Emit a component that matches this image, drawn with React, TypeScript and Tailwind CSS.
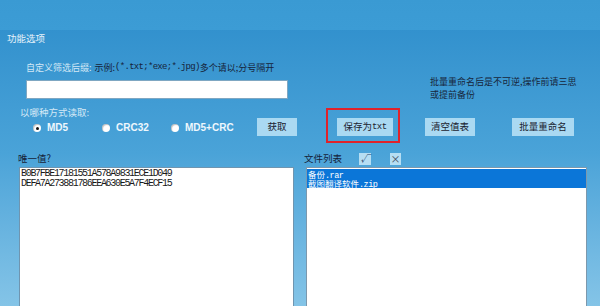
import React from "react";

const cjk = "font-['Noto_Sans_CJK_SC','Noto_Sans',sans-serif]";
const mono = "font-['Liberation_Mono','Noto_Sans_CJK_SC',monospace]";

function Radio({ label, checked, width }: { label: string; checked?: boolean; width: string }) {
    return (
        <div className={`flex items-center gap-[6px] pt-[2px] ${width}`}>
            <span className="flex h-[8px] w-[8px] items-center justify-center rounded-full bg-white shadow-[inset_1px_1px_1px_rgba(0,0,0,0.25)]">
                {checked && <span className="h-[3px] w-[3px] rounded-full bg-[#111]" />}
            </span>
            <span className="font-['Liberation_Sans',sans-serif] text-[10px] font-bold leading-none text-[#eef7fd]">{label}</span>
        </div>
    );
}

function Btn({ children, className = "" }: { children: React.ReactNode; className?: string }) {
    return (
        <div className={`flex h-[18px] items-center justify-center bg-[#aad9f2] text-[9.5px] leading-none text-[#1b2330] ${className}`}>
            {children}
        </div>
    );
}

export default function App() {
    return (
        <div className={`h-[306px] w-[600px] overflow-hidden bg-gradient-to-b from-[#2c8dcb] via-[#4aa3d8] to-[#84c4e7] ${cjk}`}>
            <div className="h-[30px] bg-gradient-to-b from-[#3a9ad3] to-[#3c9cd5]" />

            {/* 功能选项 */}
            <div className="h-[16px] pl-[7px] text-[9.5px] leading-[16px] text-[#e8f3fb]">功能选项</div>

            <div className="mt-[15px] flex h-[12px] items-center pl-[26px] text-[9px] leading-none">
                <span className="text-[#d3e8f6]">自定义筛选后缀:</span>
                <span className="ml-[3px] text-[#16243a]">示例:</span>
                <span className={`${mono} text-[9px] tracking-[-0.7px] text-[#16243a]`}>(*.txt;*exe;*.jpg)</span>
                <span className="text-[#16243a]">多个请以;分号隔开</span>
            </div>

            <div className="mt-[2px] flex">
                <div className="pl-[26px] pt-[5px]">
                    <div className="h-[19px] w-[262px] border border-[#7fa7c2] bg-white" />
                </div>
                <div className="ml-[142px] w-[160px] text-[9px] leading-[13px] text-[#17263b]">
                    <div>批量重命名后是不可逆,操作前请三思</div>
                    <div>或提前备份</div>
                </div>
            </div>

            <div className="mt-[6px] h-[11px] pl-[20px] text-[9.5px] leading-[11px] text-[#d3e8f6]">以哪种方式读取:</div>

            <div className="flex h-[18px] items-center pl-[33px]">
                <Radio label="MD5" checked width="w-[69px]" />
                <Radio label="CRC32" width="w-[69px]" />
                <Radio label="MD5+CRC" width="w-[86px]" />
                <Btn className="w-[40px]">获取</Btn>
                <div className="relative ml-[40px]">
                    <Btn className="w-[56px]">
                        保存为<span className={`${mono} text-[9px] tracking-[-0.5px]`}>txt</span>
                    </Btn>
                    <div className="absolute -left-[11px] -top-[10px] h-[35px] w-[74px] border-2 border-[#e0222b]" />
                </div>
                <Btn className="ml-[32px] w-[50px]">清空值表</Btn>
                <Btn className="ml-[37px] w-[62px]">批量重命名</Btn>
            </div>

            <div className="mt-[16px] flex h-[13px] items-center pl-[18px] text-[9.5px] leading-none text-[#15233a]">
                <span className="w-[286px]">唯一值?</span>
                <span>文件列表</span>
                <span className="ml-[17px] flex h-[12px] w-[12px] items-center justify-center bg-[#b6def3] text-[9px] italic text-[#1c3f66]">√</span>
                <span className="ml-[19px] flex h-[12px] w-[11px] items-center justify-center bg-[#b6def3] text-[10px] text-[#3b4a5a]">×</span>
            </div>

            <div className="mt-[2px] flex pl-[19px]">
                <div className={`h-[150px] w-[275px] border border-[#6f95b0] bg-white pl-[1px] pt-[1px] ${mono} text-[10px] leading-[10px] tracking-[-1.3px] text-[#1a1a1a]`}>
                    <div>B0B7FBE17181551A578A9831ECE1D049</div>
                    <div>DEFA7A273881786EEA630E5A7F4ECF15</div>
                </div>
                <div className="ml-[12px] h-[150px] w-[281px] border border-[#7c98ad] bg-white pt-[1px] text-[8.5px] text-white">
                    <div className="bg-[#0b76d8] py-[1px]">
                        <div className="h-[8px] overflow-visible pl-[1px] leading-[8px]">
                            备份<span className={`${mono} tracking-[-0.5px]`}>.rar</span>
                        </div>
                        <div className="mt-[1px] h-[8px] overflow-visible pl-[1px] leading-[8px]">
                            截图翻译软件<span className={`${mono} tracking-[-0.5px]`}>.zip</span>
                        </div>
                    </div>
                </div>
            </div>
        </div>
    );
}
